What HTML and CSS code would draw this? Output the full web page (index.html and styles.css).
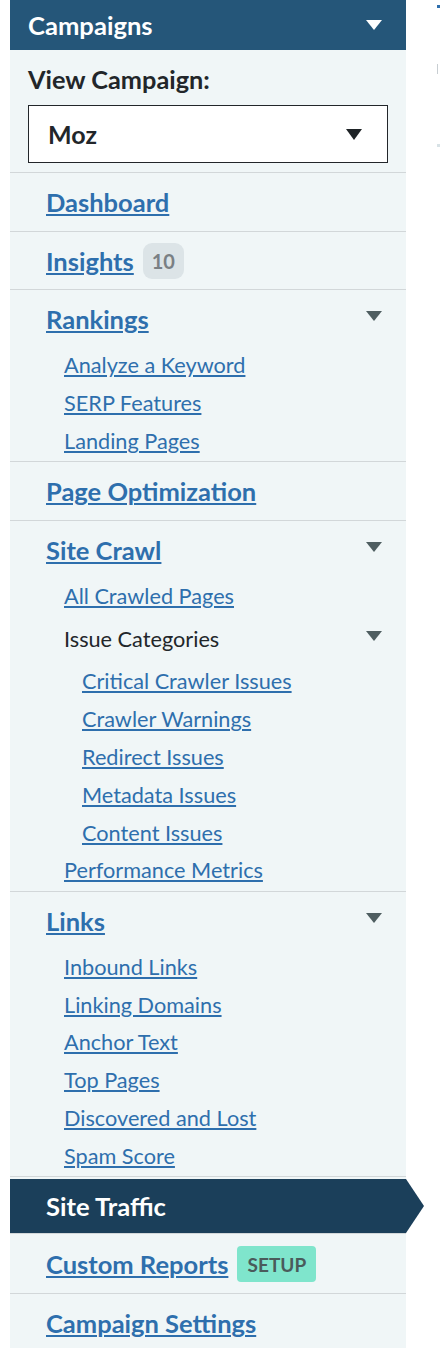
FILE: index.html
```html
<!DOCTYPE html>
<html lang="en">
<head>
<meta charset="utf-8">
<title>Campaigns</title>
<link rel="stylesheet" href="styles.css">
</head>
<body>
<aside class="sidebar">
  <div class="panel-head">
    <span class="panel-title">Campaigns</span>
    <span class="tri tri-white"></span>
  </div>
  <div class="view">
    <div class="view-label">View Campaign:</div>
    <div class="select">
      <span class="select-value">Moz</span>
      <span class="tri tri-dark"></span>
    </div>
  </div>
  <nav>
    <div class="sec">
      <div class="sec-row"><a class="sec-link" href="#">Dashboard</a></div>
    </div>
    <div class="sec">
      <div class="sec-row"><div class="row-left"><a class="sec-link" href="#">Insights</a><span class="badge badge-count">10</span></div></div>
    </div>
    <div class="sec has-sub">
      <div class="sec-row"><a class="sec-link" href="#">Rankings</a><span class="tri tri-gray"></span></div>
      <ul class="sub">
        <li><a href="#">Analyze a Keyword</a></li>
        <li><a href="#">SERP Features</a></li>
        <li><a href="#">Landing Pages</a></li>
      </ul>
    </div>
    <div class="sec">
      <div class="sec-row"><a class="sec-link" href="#">Page Optimization</a></div>
    </div>
    <div class="sec has-sub">
      <div class="sec-row"><a class="sec-link" href="#">Site Crawl</a><span class="tri tri-gray"></span></div>
      <ul class="sub">
        <li><a href="#">All Crawled Pages</a></li>
        <li class="group">
          <div class="group-row"><span class="group-title">Issue Categories</span><span class="tri tri-gray"></span></div>
          <ul class="sub nested">
            <li><a href="#">Critical Crawler Issues</a></li>
            <li><a href="#">Crawler Warnings</a></li>
            <li><a href="#">Redirect Issues</a></li>
            <li><a href="#">Metadata Issues</a></li>
            <li><a href="#">Content Issues</a></li>
          </ul>
        </li>
        <li><a href="#">Performance Metrics</a></li>
      </ul>
    </div>
    <div class="sec has-sub">
      <div class="sec-row"><a class="sec-link" href="#">Links</a><span class="tri tri-gray"></span></div>
      <ul class="sub">
        <li><a href="#">Inbound Links</a></li>
        <li><a href="#">Linking Domains</a></li>
        <li><a href="#">Anchor Text</a></li>
        <li><a href="#">Top Pages</a></li>
        <li><a href="#">Discovered and Lost</a></li>
        <li><a href="#">Spam Score</a></li>
      </ul>
    </div>
    <div class="active-wrap">
      <div class="active-row">Site Traffic</div>
    </div>
    <div class="sec sec-tall">
      <div class="sec-row"><div class="row-left"><a class="sec-link" href="#">Custom Reports</a><span class="badge badge-setup">SETUP</span></div></div>
    </div>
    <div class="sec">
      <div class="sec-row"><a class="sec-link" href="#">Campaign Settings</a></div>
    </div>
  </nav>
</aside>
<main class="main">
  <span class="frag frag-dot"></span>
  <span class="frag frag-line"></span>
  <span class="frag frag-sq"></span>
</main>
</body>
</html>
```

FILE: styles.css
```css
* { box-sizing: border-box; }
html, body { margin: 0; padding: 0; background: #ffffff; }
body {
  display: flex;
  align-items: flex-start;
  padding-left: 10px;
  font-family: Lato, "Open Sans", "Liberation Sans", sans-serif;
}
.sidebar {
  width: 396px;
  flex: none;
  background: #f0f6f7;
  min-height: 1348px;
}
.panel-head {
  height: 50px;
  background: #255679;
  display: flex;
  align-items: center;
  justify-content: space-between;
  padding: 0 24px 0 18px;
}
.panel-title {
  color: #ffffff;
  font-weight: 700;
  font-size: 25.6px;
  line-height: 28px;
}
.tri {
  width: 0;
  height: 0;
  border-left: 8px solid transparent;
  border-right: 8px solid transparent;
  border-top: 10px solid #ffffff;
  flex: none;
}
.tri-white { border-top-color: #ffffff; }
.tri-dark { border-top-color: #1e2326; border-left-width: 8px; border-right-width: 8px; border-top-width: 11px; }
.tri-gray { border-top-color: #4f5e61; border-left-width: 8.5px; border-right-width: 8.5px; margin-bottom: 6px; }
.view {
  padding: 15px 18px 9px;
  border-bottom: 1px solid #d2d7d9;
}
.view-label {
  font-weight: 700;
  font-size: 25.3px;
  line-height: 28px;
  color: #22262a;
}
.select {
  margin-top: 12px;
  height: 58px;
  background: #ffffff;
  border: 1px solid #22262a;
  display: flex;
  align-items: center;
  justify-content: space-between;
  padding: 0 25px 0 19px;
}
.select-value {
  font-weight: 700;
  font-size: 25px;
  color: #22262a;
}
.sec {
  border-bottom: 1px solid #d2d7d9;
  padding: 15px 24px 14.6px 36px;
}
.sec.has-sub { padding-bottom: 0.6px; }
.sec.sec-tall { padding-top: 16px; padding-bottom: 15px; }
.sec-row, .group-row {
  display: flex;
  align-items: center;
  justify-content: space-between;
}
.row-left {
  display: flex;
  align-items: center;
  gap: 9px;
}
.sec-link {
  font-weight: 700;
  font-size: 25.5px;
  line-height: 28px;
  color: #2e6fad;
  text-decoration: underline;
  text-decoration-thickness: 2px;
  text-underline-offset: 2px;
}
.badge {
  height: 36px;
  margin: -4px 0;
  border-radius: 9px;
  display: inline-flex;
  align-items: center;
  justify-content: center;
  font-weight: 700;
}
.badge-count {
  width: 41px;
  background: #dce4e7;
  color: #7a8084;
  font-size: 20px;
}
.badge-setup {
  width: 79px;
  background: #7fe5cc;
  color: #4a5b5b;
  font-size: 19px;
  border-radius: 4px;
}
.sub {
  list-style: none;
  margin: 14px 0 0;
  padding: 0 0 0 18px;
}
.sub li {
  line-height: 37.8px;
  font-size: 21.7px;
}
.sub a {
  color: #2e6fad;
  text-decoration: underline;
  text-decoration-thickness: 2px;
  text-underline-offset: 2px;
}
.sub .group { margin-top: 5px; }
.group-title { color: #22262a; }
.sub.nested { margin-top: 5px; }
.active-wrap {
  padding-top: 2px;
  border-bottom: 1px solid #d2d7d9;
}
.active-row {
  height: 54px;
  margin-right: -18px;
  background: #1b3f5a;
  color: #ffffff;
  font-weight: 700;
  font-size: 25.6px;
  display: flex;
  align-items: center;
  padding-left: 36px;
  clip-path: polygon(0 0, 396px 0, 414px 50%, 396px 100%, 0 100%);
}
.main {
  flex: 1;
  display: flex;
  flex-direction: column;
  align-items: flex-start;
  padding: 5px 0 0 31px;
}
.frag { display: block; }
.frag-dot { width: 3px; height: 3px; background: #2e6fad; }
.frag-line { width: 1px; height: 10px; background: #c8ced2; margin-top: 56px; }
.frag-sq { width: 3px; height: 3px; background: #d8e2e6; margin-top: 70px; }
```
